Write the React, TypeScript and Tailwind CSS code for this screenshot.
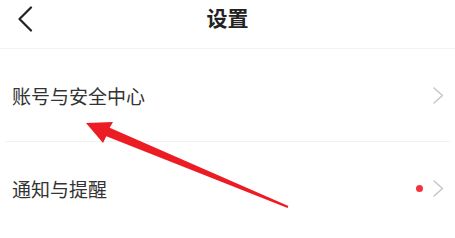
const font = { fontFamily: '"Noto Sans CJK SC", "Noto Sans", sans-serif' };

function Chevron() {
  return (
    <svg width="11" height="17" viewBox="0 0 11 17" fill="none">
      <polyline points="1,1 9.5,8.5 1,16" stroke="#c6c6c6" strokeWidth="1.5" strokeLinecap="round" strokeLinejoin="round" />
    </svg>
  );
}

function Row({ label, dot, divider }: { label: string; dot?: boolean; divider?: boolean }) {
  return (
    <div className={`flex items-center justify-between h-[93px] pl-[7px] pr-[6px] mx-[5px] ${divider ? 'border-b border-[#f2f2f2]' : ''}`}>
      <span className="text-[19px] text-[#333] leading-none">{label}</span>
      <div className="flex items-center gap-[10px]">
        {dot && <span className="w-[7px] h-[7px] rounded-full bg-[#f5333f]" />}
        <Chevron />
      </div>
    </div>
  );
}

export default function App() {
  return (
    <div className="relative w-[455px] h-[238px] bg-white overflow-hidden" style={font}>
      <div className="relative flex items-center justify-center h-[49px] border-b border-[#f3f3f3]">
        <svg className="absolute left-[17px] top-[6px]" width="16" height="26" viewBox="0 0 16 26" fill="none">
          <polyline points="14,1.5 2.5,13 14,24.5" stroke="#222" strokeWidth="2.2" strokeLinecap="round" strokeLinejoin="round" />
        </svg>
        <span className="text-[21px] font-bold text-[#222] -mt-[12px]">设置</span>
      </div>
      <Row label="账号与安全中心" divider />
      <Row label="通知与提醒" dot />
      <svg className="absolute inset-0 pointer-events-none" width="455" height="238" viewBox="0 0 455 238">
        <polygon
          points="86,123 113,122 109.7,127.8 288.4,206 287.6,208 106.3,136.2 103,143"
          fill="#ec1c24"
        />
      </svg>
    </div>
  );
}
